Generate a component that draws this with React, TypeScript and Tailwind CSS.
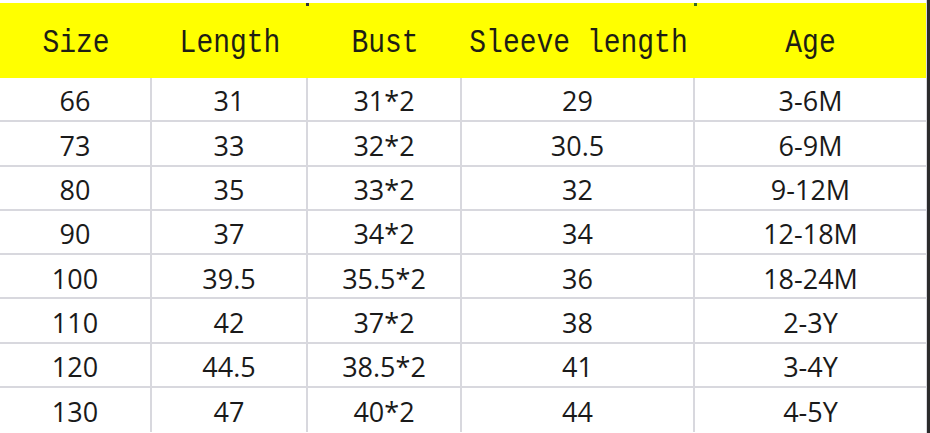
import React from "react";

const cols = ["w-[152px]", "w-[156px]", "w-[154px]", "w-[233px]", "w-[231px]"];

const header = ["Size", "Length", "Bust", "Sleeve length", "Age"];

const rows: string[][] = [
  ["66", "31", "31*2", "29", "3-6M"],
  ["73", "33", "32*2", "30.5", "6-9M"],
  ["80", "35", "33*2", "32", "9-12M"],
  ["90", "37", "34*2", "34", "12-18M"],
  ["100", "39.5", "35.5*2", "36", "18-24M"],
  ["110", "42", "37*2", "38", "2-3Y"],
  ["120", "44.5", "38.5*2", "41", "3-4Y"],
  ["130", "47", "40*2", "44", "4-5Y"],
];

export default function App() {
  return (
    <div className="w-[930px] h-[433px] bg-white flex overflow-hidden">
      <div className="w-[926px] flex flex-col pt-[3px] relative">
        <div className="flex h-[75px] bg-[#ffff00] shrink-0">
          {header.map((h, i) => (
            <div
              key={i}
              className={`${cols[i]} flex items-center justify-center pt-[6px] text-[28px] text-[#1e1e14] whitespace-pre`}
              style={{ fontFamily: '"Liberation Mono", "DejaVu Sans Mono", monospace' }}
            >
              <span className="inline-block scale-y-[1.2]">{h}</span>
            </div>
          ))}
        </div>
        <div className="absolute left-[306px] top-[3px] w-[3px] h-[3px] bg-[#333]" />
        <div className="absolute left-[694px] top-[3px] w-[3px] h-[3px] bg-[#3a6a20]" />
        {rows.map((r, ri) => (
          <div
            key={ri}
            className={`flex h-[44.3px] shrink-0 ${ri < rows.length - 1 ? "border-b-2 border-[#d8d8de]" : ""}`}
          >
            {r.map((c, ci) => (
              <div
                key={ci}
                className={`${cols[ci]} flex items-center justify-center pt-[5px] text-[27px] text-[#1a1a1a] ${ci < 4 ? "border-r-2 border-[#d8d8de]" : ""}`}
                style={{ fontFamily: '"Open Sans", "Liberation Sans", sans-serif' }}
              >
                {c}
              </div>
            ))}
          </div>
        ))}
      </div>
      <div className="w-[1px] bg-[#d8d8de]" />
      <div className="w-[3px] bg-[#2b2b2b]" />
    </div>
  );
}
